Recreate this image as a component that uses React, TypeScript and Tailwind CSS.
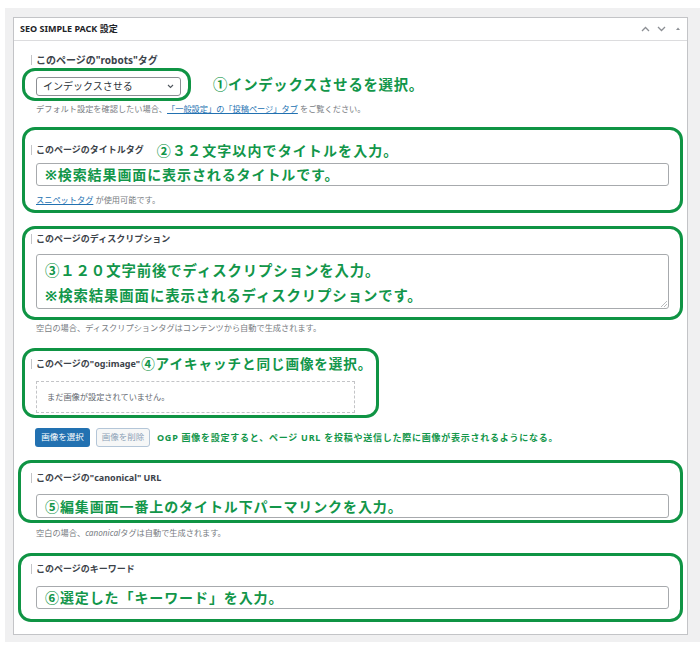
const green = "text-[#12964a]";

function Label({ children, size = "text-[9px]" }: { children: React.ReactNode; size?: string }) {
  return (
    <span className={`-ml-[5px] inline-block border-l border-[#c3c4c7] pl-[4px] leading-[10px] font-bold text-[#3c434a] ${size}`}>
      {children}
    </span>
  );
}

function Help({ children, className = "" }: { children: React.ReactNode; className?: string }) {
  return <div className={`flex h-[14px] items-center text-[8.2px] text-[#787c82] ${className}`}>{children}</div>;
}

function FakeInput({ children, className = "" }: { children?: React.ReactNode; className?: string }) {
  return (
    <div
      className={`flex items-center rounded-[3px] border border-[#a7aaad] bg-white pl-[8px] font-bold text-[14px] tracking-[0.9px] ${green} ${className}`}
    >
      {children}
    </div>
  );
}

export default function App() {
  return (
    <div className="h-[650px] w-[700px] bg-white pl-[5px] pt-[8px] font-['Noto_Sans','Noto_Sans_CJK_JP',sans-serif]">
      <div className="h-[634px] bg-[#f0f0f1] pl-[8px] pr-[12px] pt-[9px]">
        <div className="h-[618px] border border-[#c3c4c7] bg-white">
          {/* header */}
          <div className="flex h-[23px] items-center justify-between border-b border-[#dcdcde] pl-[6px] pr-[6px]">
            <span className="text-[9px] font-bold text-[#1d2327]">SEO SIMPLE PACK 設定</span>
            <div className="flex items-center gap-[7px] text-[#8c8f94]">
              <svg width="9" height="6" viewBox="0 0 9 6" fill="none" stroke="currentColor" strokeWidth="1.3">
                <polyline points="1,5 4.5,1.5 8,5" />
              </svg>
              <svg width="9" height="6" viewBox="0 0 9 6" fill="none" stroke="currentColor" strokeWidth="1.3">
                <polyline points="1,1 4.5,4.5 8,1" />
              </svg>
              <svg width="6" height="6" viewBox="0 0 6 6" className="ml-[2px]">
                <polygon points="3,1.5 5,4 1,4" fill="currentColor" />
              </svg>
            </div>
          </div>

          <div className="pl-[22px] pr-[18px]">
            {/* robots */}
            <div className="mt-[12px] flex h-[14px] items-center">
              <Label size="text-[10px]">このページの"robots"タグ</Label>
            </div>
            <div className="mt-[1px] flex items-center">
              <div className="-ml-[14px] rounded-[13px] border-[3px] border-[#0f9444] pb-[2px] pl-[11px] pr-[7px] pt-[6px]">
                <div className="flex h-[19px] w-[145px] items-center justify-between rounded-[3px] border border-[#8c8f94] pl-[6px] pr-[6px] text-[10px] text-[#2c3338]">
                  <span>インデックスさせる</span>
                  <svg width="7" height="5" viewBox="0 0 7 5" fill="none" stroke="#50575e" strokeWidth="1.1">
                    <polyline points="1,1 3.5,3.5 6,1" />
                  </svg>
                </div>
              </div>
              <span className={`ml-[22px] text-[14.4px] font-bold tracking-[0.7px] ${green}`}>①インデックスさせるを選択。</span>
            </div>
            <Help className="mt-[1px]">
              デフォルト設定を確認したい場合、
              <span className="text-[#2271b1] underline">「一般設定」の「投稿ページ」タブ</span>
              &nbsp;をご覧ください。
            </Help>

            {/* title */}
            <div className="-mx-[14px] mt-[11px] rounded-[13px] border-[3px] border-[#0f9444] px-[11px] pb-[3px] pt-[9px]">
              <div className="flex h-[22px] items-center">
                <Label>このページのタイトルタグ</Label>
                <span className={`ml-[13px] text-[14px] font-bold tracking-[1.1px] ${green}`}>②３２文字以内でタイトルを入力。</span>
              </div>
              <FakeInput className="mt-[2px] h-[23px]">※検索結果画面に表示されるタイトルです。</FakeInput>
              <Help className="mt-[7px]">
                <span className="text-[#2271b1] underline">スニペットタグ</span>&nbsp;が使用可能です。
              </Help>
            </div>

            {/* description */}
            <div className="-mx-[14px] mt-[13px] rounded-[13px] border-[3px] border-[#0f9444] px-[11px] pb-[8px] pt-[3px]">
              <div className="flex h-[14px] items-center">
                <Label>このページのディスクリプション</Label>
              </div>
              <div
                className={`relative mt-[8px] h-[55px] rounded-[3px] border border-[#a7aaad] pl-[8px] pt-[3px] text-[14.4px] font-bold leading-[25px] tracking-[0.9px] ${green}`}
              >
                <div>③１２０文字前後でディスクリプションを入力。</div>
                <div>※検索結果画面に表示されるディスクリプションです。</div>
                <svg width="7" height="7" viewBox="0 0 7 7" className="absolute bottom-[1px] right-[1px]" stroke="#a7aaad" strokeWidth="0.8">
                  <line x1="1" y1="7" x2="7" y2="1" />
                  <line x1="4" y1="7" x2="7" y2="4" />
                </svg>
              </div>
            </div>
            <Help className="mt-[1px]">空白の場合、ディスクリプションタグはコンテンツから自動で生成されます。</Help>

            {/* og:image */}
            <div className="-ml-[14px] mt-[13px] w-[357px] rounded-[13px] border-[3px] border-[#0f9444] pb-[2px] pl-[11px] pt-[2px]">
              <div className="flex h-[22px] items-center">
                <Label>このページの"og:image"</Label>
                <span className={`ml-[1px] text-[13.6px] font-bold tracking-[0.9px] ${green}`}>④アイキャッチと同じ画像を選択。</span>
              </div>
              <div className="mt-[6px] flex h-[32px] w-[319px] items-center border border-dashed border-[#c3c4c7] pl-[10px] text-[8.2px] text-[#646970]">
                まだ画像が設定されていません。
              </div>
            </div>
            <div className="mt-[10px] flex h-[19px] items-center">
              <div className="-ml-[1px] flex h-[19px] w-[55px] items-center justify-center rounded-[3px] bg-[#2271b1] text-[8.5px] text-white">
                画像を選択
              </div>
              <div className="ml-[6px] flex h-[19px] w-[54px] items-center justify-center rounded-[3px] border border-[#b4c6d8] bg-[#f6f7f7] text-[8.5px] text-[#8ea3b8]">
                画像を削除
              </div>
              <span className={`ml-[7px] text-[9px] font-bold tracking-[0.75px] ${green}`}>
                OGP 画像を設定すると、ページ URL を投稿や送信した際に画像が表示されるようになる。
              </span>
            </div>

            {/* canonical */}
            <div className="-ml-[18px] -mr-[14px] mt-[13px] rounded-[13px] border-[3px] border-[#0f9444] pb-[2px] pl-[15px] pr-[11px] pt-[8px]">
              <div className="flex h-[14px] items-center">
                <Label>このページの"canonical" URL</Label>
              </div>
              <FakeInput className="mt-[9px] h-[24px]">⑤編集画面一番上のタイトル下パーマリンクを入力。</FakeInput>
            </div>
            <Help className="mt-[3px]">
              空白の場合、<i>canonical</i>タグは自動で生成されます。
            </Help>

            {/* keyword */}
            <div className="-ml-[18px] -mr-[14px] mt-[13px] rounded-[13px] border-[3px] border-[#0f9444] pb-[10px] pl-[15px] pr-[11px] pt-[6px]">
              <div className="flex h-[14px] items-center">
                <Label>このページのキーワード</Label>
              </div>
              <FakeInput className="mt-[10px] h-[23px]">⑥選定した「キーワード」を入力。</FakeInput>
            </div>
          </div>
        </div>
      </div>
    </div>
  );
}
